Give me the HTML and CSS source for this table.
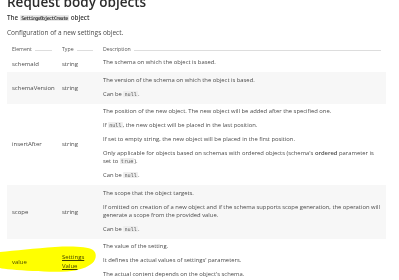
FILE: index.html
```html
<!DOCTYPE html>
<html lang="en">
<head>
<meta charset="utf-8">
<title>Request body objects</title>
<link rel="stylesheet" href="styles.css">
</head>
<body>
<div class="page">
  <h2 class="title">Request body objects</h2>
  <h3 class="obj">The <code class="code-b">SettingsObjectCreate</code> object</h3>
  <p class="intro">Configuration of a new settings object.</p>
  <div class="table">
    <div class="row head">
      <div class="th"><span>Element</span><span class="rule"></span></div>
      <div class="th"><span>Type</span><span class="rule"></span></div>
      <div class="th"><span>Description</span><span class="rule"></span></div>
    </div>
    <div class="row">
      <div class="name">schemaId</div>
      <div class="type">string</div>
      <div class="desc"><p>The schema on which the object is based.</p></div>
    </div>
    <div class="row alt">
      <div class="name">schemaVersion</div>
      <div class="type">string</div>
      <div class="desc">
        <p>The version of the schema on which the object is based.</p>
        <p>Can be <code>null</code>.</p>
      </div>
    </div>
    <div class="row">
      <div class="name">insertAfter</div>
      <div class="type">string</div>
      <div class="desc">
        <p>The position of the new object. The new object will be added after the specified one.</p>
        <p>If <code>null</code>, the new object will be placed in the last position.</p>
        <p>If set to empty string, the new object will be placed in the first position.</p>
        <p>Only applicable for objects based on schemas with ordered objects (schema's <b>ordered</b> parameter is set to <code>true</code>).</p>
        <p>Can be <code>null</code>.</p>
      </div>
    </div>
    <div class="row alt">
      <div class="name">scope</div>
      <div class="type">string</div>
      <div class="desc">
        <p>The scope that the object targets.</p>
        <p>If omitted on creation of a new object and if the schema supports scope generation, the operation will generate a scope from the provided value.</p>
        <p>Can be <code>null</code>.</p>
      </div>
    </div>
    <div class="row">
      <div class="name">value</div>
      <div class="type"><a class="link" href="#">Settings Value</a></div>
      <div class="desc">
        <p>The value of the setting.</p>
        <p>It defines the actual values of settings' parameters.</p>
        <p>The actual content depends on the object's schema.</p>
      </div>
    </div>
  </div>
  <svg class="highlight" width="399" height="280" viewBox="0 0 399 280" aria-hidden="true">
    <path d="M0,252 C15,250.5 35,248.5 55,247 C72,246 87,246.5 93,250 C97,253 96.5,259 92.5,263 C87.5,267.5 79,270.5 67,271.5 C50,272.5 28,271 12,269.5 C6,269 2,268.5 0,268 Z" fill="#ffff00"/>
  </svg>
</div>
</body>
</html>
```

FILE: styles.css
```css
html, body {
  margin: 0;
  background: #ffffff;
}

body {
  font-family: "Open Sans", "Liberation Sans", sans-serif;
  color: #4a4a4a;
  overflow: hidden;
  width: 399px;
  height: 280px;
}

.page {
  position: relative;
  display: flow-root;
  padding: 0 13px 0 7px;
}

.title {
  margin: -4.8px 0 0;
  font-size: 13.5px;
  line-height: 14px;
  font-weight: 600;
  color: #2c2c2c;
}

.obj {
  margin: 4.3px 0 0;
  font-size: 6.3px;
  line-height: 8px;
  font-weight: 600;
  color: #3a3a3a;
}

.intro {
  margin: 7.5px 0 0;
  font-size: 6.5px;
  line-height: 8px;
}

code {
  font-family: "DejaVu Sans Mono", "Liberation Mono", monospace;
  font-size: 5.2px;
  background: #eeeeee;
  color: #555555;
  padding: 0 1px;
  border-radius: 1px;
}

.code-b {
  font-size: 5px;
  font-weight: bold;
  letter-spacing: -0.7px;
  color: #444444;
  background: #e8e8e8;
  padding: 0 1.5px;
}

.table {
  margin-top: 8.3px;
}

.row {
  display: grid;
  grid-template-columns: 50px 41px 1fr;
}

.row.alt {
  background: #f7f7f7;
}

.head {
  padding-bottom: 1.7px;
}

.th {
  display: flex;
  padding: 0 5px;
  font-size: 5.2px;
  line-height: 8px;
  color: #555555;
}

.rule {
  flex: 1;
  align-self: flex-end;
  border-bottom: 1px solid #dddddd;
  margin: 0 0 2.5px 3px;
}

.name,
.type {
  align-self: center;
  padding: 0 5px;
  font-size: 6px;
  line-height: 8.2px;
}

.desc {
  padding: 3.4px 3px 0 5px;
  font-size: 5.85px;
  line-height: 8.2px;
}

.desc p {
  margin: 0 0 5.8px;
}

.desc b {
  font-weight: 600;
}

.link {
  color: #3f3f3f;
  text-decoration: underline;
}

.highlight {
  position: absolute;
  left: 0;
  top: 0;
  pointer-events: none;
  mix-blend-mode: multiply;
}
```
